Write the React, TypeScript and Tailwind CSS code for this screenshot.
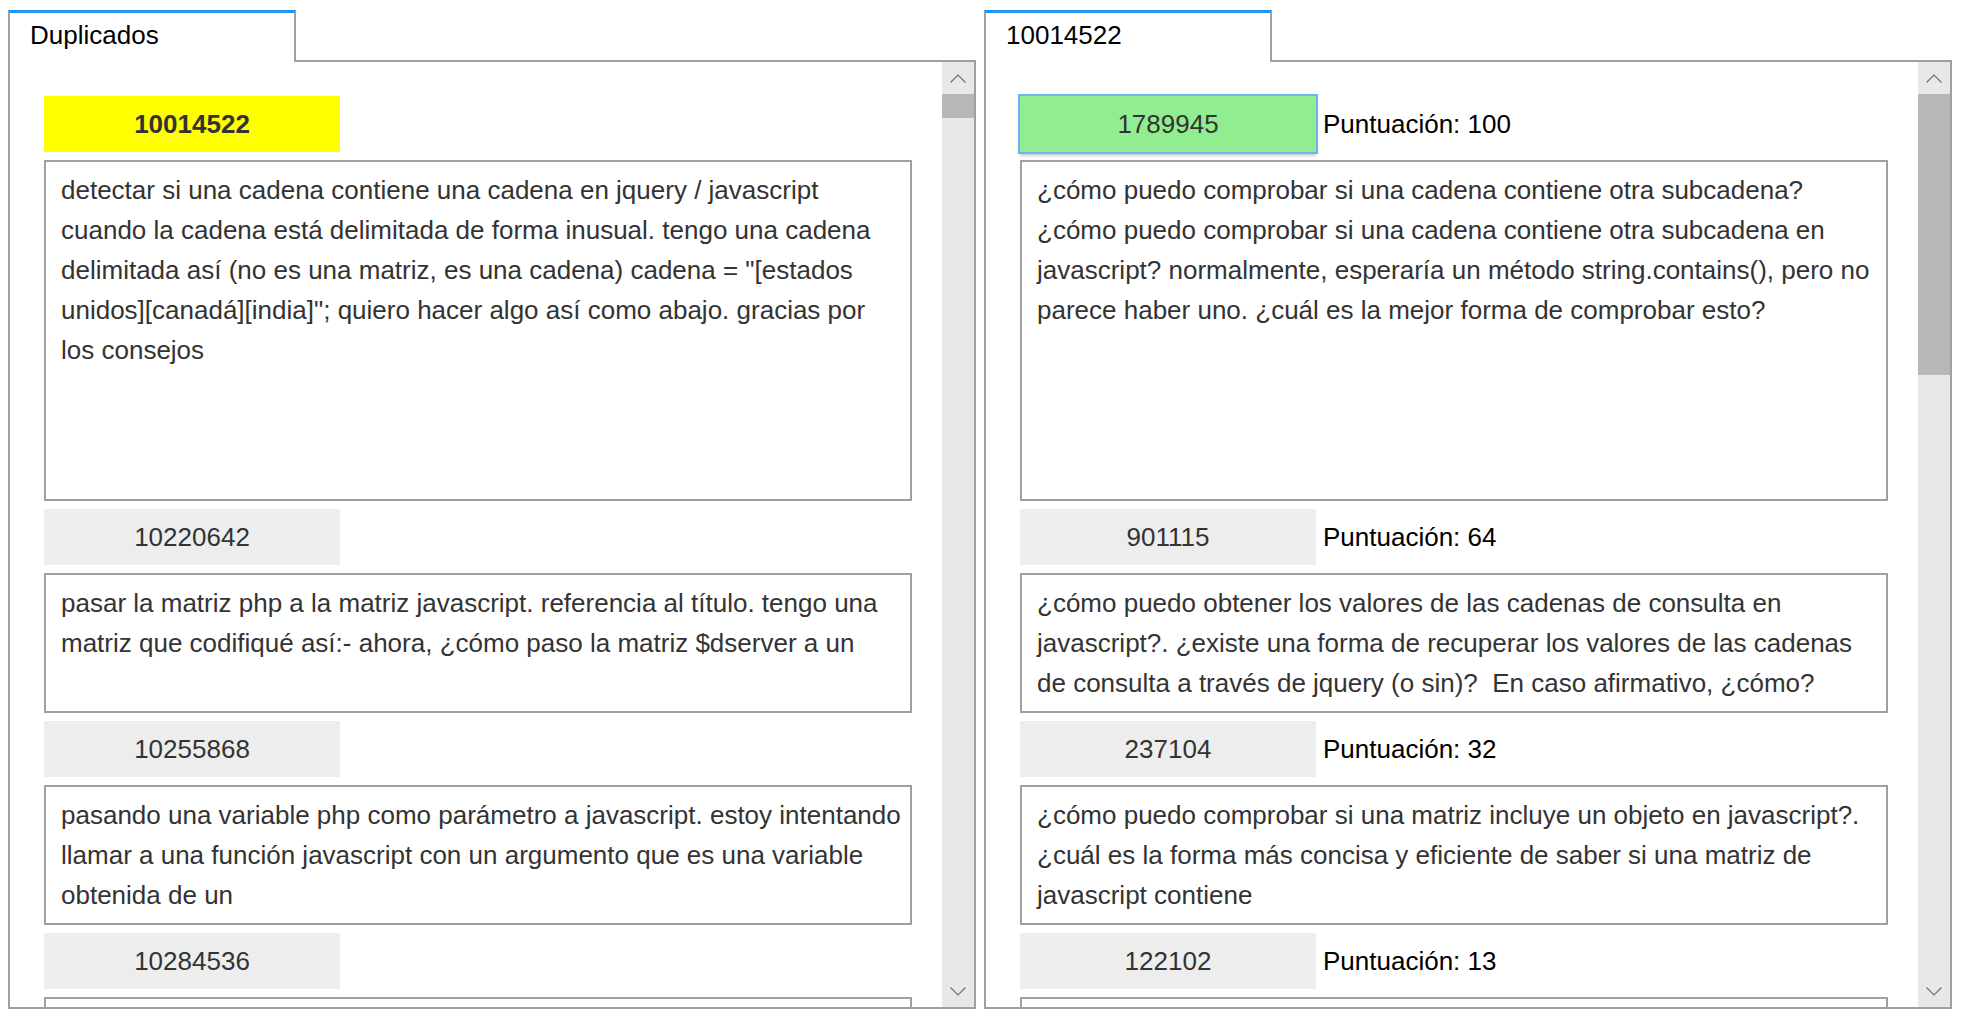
import React from "react";

type Row = {
  id: string;
  lines: string[];
  score?: number;
  tone?: "yellow" | "green" | "gray";
  tall?: boolean;
};

const leftRows: Row[] = [
  {
    id: "10014522",
    tone: "yellow",
    tall: true,
    lines: [
      "detectar si una cadena contiene una cadena en jquery / javascript",
      "cuando la cadena está delimitada de forma inusual. tengo una cadena",
      'delimitada así (no es una matriz, es una cadena) cadena = "[estados',
      'unidos][canadá][india]"; quiero hacer algo así como abajo. gracias por',
      "los consejos",
    ],
  },
  {
    id: "10220642",
    lines: [
      "pasar la matriz php a la matriz javascript. referencia al título. tengo una",
      "matriz que codifiqué así:- ahora, ¿cómo paso la matriz $dserver a un",
    ],
  },
  {
    id: "10255868",
    lines: [
      "pasando una variable php como parámetro a javascript. estoy intentando",
      "llamar a una función javascript con un argumento que es una variable",
      "obtenida de un",
    ],
  },
  { id: "10284536", lines: [] },
];

const rightRows: Row[] = [
  {
    id: "1789945",
    tone: "green",
    score: 100,
    tall: true,
    lines: [
      "¿cómo puedo comprobar si una cadena contiene otra subcadena?",
      "¿cómo puedo comprobar si una cadena contiene otra subcadena en",
      "javascript? normalmente, esperaría un método string.contains(), pero no",
      "parece haber uno. ¿cuál es la mejor forma de comprobar esto?",
    ],
  },
  {
    id: "901115",
    score: 64,
    lines: [
      "¿cómo puedo obtener los valores de las cadenas de consulta en",
      "javascript?. ¿existe una forma de recuperar los valores de las cadenas",
      "de consulta a través de jquery (o sin)?  En caso afirmativo, ¿cómo?",
    ],
  },
  {
    id: "237104",
    score: 32,
    lines: [
      "¿cómo puedo comprobar si una matriz incluye un objeto en javascript?.",
      "¿cuál es la forma más concisa y eficiente de saber si una matriz de",
      "javascript contiene",
    ],
  },
  { id: "122102", score: 13, lines: [] },
];

const Chevron = ({ down }: { down?: boolean }) => (
  <svg width="16" height="9" viewBox="0 0 16 9" fill="none">
    <path
      d={down ? "M0.5 0.5 L8 8 L15.5 0.5" : "M0.5 8.5 L8 1 L15.5 8.5"}
      stroke="#707070"
      strokeWidth="1.2"
    />
  </svg>
);

const Scrollbar = ({ thumb }: { thumb: string }) => (
  <div className="flex w-[32px] flex-col bg-[#e8e8e8]">
    <div className="flex h-[32px] items-center justify-center">
      <Chevron />
    </div>
    <div className={`${thumb} bg-[#b8b8b8]`} />
    <div className="flex-1" />
    <div className="flex h-[32px] items-center justify-center">
      <Chevron down />
    </div>
  </div>
);

const headerTone = {
  yellow: "bg-[#ffff00] font-bold",
  green: "bg-[#90ee90] outline-2 outline-[#6ab4f2] shadow-[0_3px_4px_rgba(0,0,0,0.3)]",
  gray: "bg-[#ededed]",
};

const Entry = ({ row }: { row: Row }) => (
  <>
    <div className="flex h-[56px] shrink-0 items-center">
      <div
        className={`flex h-[56px] w-[296px] items-center justify-center text-[26px] text-[#333] ${headerTone[row.tone ?? "gray"]}`}
      >
        {row.id}
      </div>
      {row.score !== undefined && (
        <span className="ml-[7px] text-[26px] text-black">Puntuación: {row.score}</span>
      )}
    </div>
    <div
      className={`${row.tall ? "h-[341px]" : "h-[140px]"} shrink-0 overflow-hidden border-2 border-[#a0a0a0] pl-[15px] pr-[8px] pt-[8px] text-[26px] leading-[40px] whitespace-pre text-[#333]`}
    >
      {row.lines.join("\n")}
    </div>
  </>
);

const Panel = ({ label, rows, thumb }: { label: string; rows: Row[]; thumb: string }) => (
  <div className="flex h-[999px] w-[968px] flex-col">
    <div className="flex h-[52px] shrink-0">
      <div className="w-[288px] border-x-2 border-t-[3px] border-x-[#a0a0a0] border-t-[#2196f3] pl-[20px] pt-[9px] text-[26px] leading-[26px] text-black">
        {label}
      </div>
      <div className="flex-1 border-b-2 border-[#a0a0a0]" />
    </div>
    <div className="flex min-h-0 flex-1 border-x-2 border-b-2 border-[#a0a0a0]">
      <div className="flex min-w-0 flex-1 flex-col gap-2 overflow-hidden pl-[34px] pr-[30px] pt-[34px]">
        {rows.map((r) => (
          <Entry key={r.id} row={r} />
        ))}
      </div>
      <Scrollbar thumb={thumb} />
    </div>
  </div>
);

export default function App() {
  return (
    <div className="flex h-[1024px] w-[1968px] gap-2 overflow-hidden bg-white pl-2 pt-[10px] font-['Liberation_Sans',Arial,sans-serif]">
      <Panel label="Duplicados" rows={leftRows} thumb="h-[24px]" />
      <Panel label="10014522" rows={rightRows} thumb="h-[281px]" />
    </div>
  );
}
